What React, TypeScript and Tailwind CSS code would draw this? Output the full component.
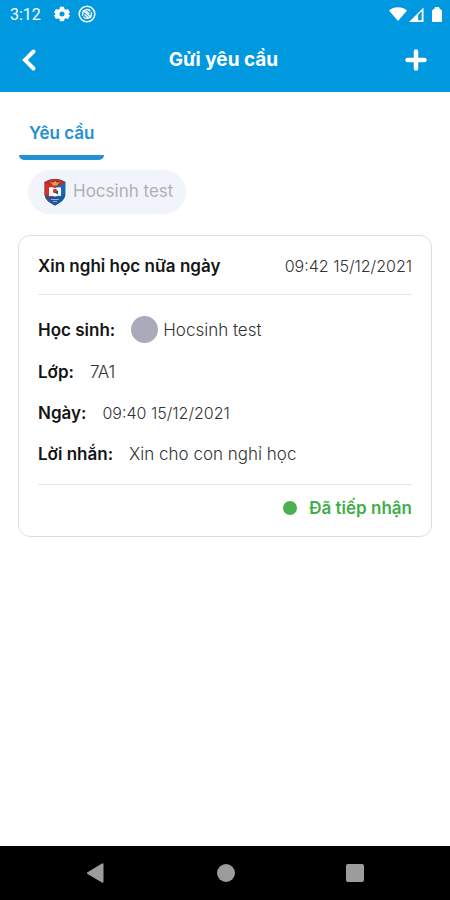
import type { ReactNode } from "react";

function StatusBar() {
  return (
    <div className="flex h-7 items-center justify-between pl-[10px] pr-2">
      <div className="flex items-center">
        <span className="w-11 pt-[2px] font-['Roboto',sans-serif] text-base leading-5">3:12</span>
        <svg className="h-4 w-4" viewBox="0 0 24 24" fill="currentColor" aria-hidden="true">
          <path
            fillRule="evenodd"
            d="M9 1h6l.7 3.5 1.9 1.1L21 4.4l3 5.2-2.7 2.3v.2L24 14.4l-3 5.2-3.4-1.2-1.9 1.1L15 23H9l-.7-3.5-1.9-1.1L3 19.6l-3-5.2 2.7-2.3v-.2L0 9.6l3-5.2 3.4 1.2 1.9-1.1zM12 8.2a3.8 3.8 0 1 0 0 7.6 3.8 3.8 0 0 0 0-7.6z"
          />
        </svg>
        <svg
          className="ml-2 h-[18px] w-[18px]"
          viewBox="0 0 18 18"
          fill="none"
          stroke="currentColor"
          aria-hidden="true"
        >
          <circle cx="9" cy="9" r="7.8" strokeWidth="1.5" />
          <path d="M4.6 10.8V9A4.4 4.4 0 0 1 12.5 6.3M13.4 7.2V9A4.4 4.4 0 0 1 5.5 11.7" strokeWidth="1.4" />
          <path d="M5 5.3L13.2 12.8M6.6 9.5l3.6 3.2M8 5.9l3.4 3" strokeWidth="1.3" />
        </svg>
      </div>
      <div className="flex items-center">
        <svg className="h-[14px] w-[18px]" viewBox="0 0 18 14" fill="currentColor" aria-hidden="true">
          <path d="M0 3.5C5-.8 13-.8 18 3.5L9 14z" />
        </svg>
        <svg className="ml-[2px] h-[15px] w-[15px]" viewBox="0 0 15 15" fill="currentColor" aria-hidden="true">
          <path fillRule="evenodd" d="M0 15L14.500 .500V15zM9.200 7.800v5.400h3.500V4.300z" />
        </svg>
        <svg className="ml-2 h-[15px] w-[10px]" viewBox="0 0 10 15" fill="currentColor" aria-hidden="true">
          <path d="M3 0h4l.5 1.500L10 3.500V14q0 1-1 1H1q-1 0-1-1V3.500l2.500-2z" />
        </svg>
      </div>
    </div>
  );
}

function Header() {
  return (
    <header className="bg-[#0099df] text-white">
      <StatusBar />
      <div className="flex h-16 items-center justify-between pl-[19px] pr-[22px]">
        <button type="button" aria-label="Quay lại" className="flex h-6 w-6 items-center">
          <svg viewBox="0 0 24 24" className="h-6 w-6" fill="none" stroke="currentColor" strokeWidth="4">
            <path d="M14.5 3.5L6 12l8.5 8.5" strokeLinecap="round" strokeLinejoin="miter" />
          </svg>
        </button>
        <h1 className="text-[19px] font-bold leading-6">Gửi yêu cầu</h1>
        <button type="button" aria-label="Thêm yêu cầu" className="flex h-6 w-6 items-center">
          <svg viewBox="0 0 24 24" className="h-6 w-6" fill="none" stroke="currentColor" strokeWidth="4.5">
            <path d="M12 3.5v17M3.5 12h17" strokeLinecap="round" />
          </svg>
        </button>
      </div>
    </header>
  );
}

function SchoolBadge() {
  return (
    <svg className="h-7 w-7" viewBox="0 0 28 28" aria-hidden="true">
      <circle cx="14" cy="14" r="13.5" fill="#fff" stroke="#e5eaf2" />
      <path d="M3.500 4Q10 .5 14 1q4-.5 10.500 3v13Q24 23 14 27.500 4 23 3.500 17z" fill="#1768bd" />
      <path d="M3.500 4H14v23.500Q4 23 3.500 17z" fill="#d92f2a" />
      <path d="M4 16.500Q5 23 14 27.500 23 23 24 16.500L19 19H9z" fill="#1d56a0" />
      <path d="M3.500 4Q10 .5 14 1q4-.5 10.500 3L20 7.500H8z" fill="#b9302b" />
      <path d="M9 3.500l3 1.500 2-2 2 2 3-1.500-3 4h-4z" fill="#e8a33f" />
      <path d="M8 9.500q3-.8 6 .5 3-1.300 6-.5V18q-3-.7-6 .6Q11 17.300 8 18z" fill="#fff" />
      <circle cx="14" cy="13" r="2.200" fill="#d33a32" />
      <path d="M13.500 14.500l3.500 2v-4z" fill="#294e80" />
      <path d="M10 21.500h8M12 23.500h4" stroke="#8baed5" />
    </svg>
  );
}

function Row({ label, children }: { label: string; children: ReactNode }) {
  return (
    <div className="flex items-center gap-4">
      <dt className="font-semibold text-[#151515]">{label}</dt>
      <dd className="flex items-center font-light text-[#333]">{children}</dd>
    </div>
  );
}

function RequestCard() {
  return (
    <article className="mx-[18px] mt-[21px] rounded-xl border border-[#dedede] px-[19px] text-[17px] leading-6">
      <div className="flex items-center justify-between border-b border-[#e6e6e6] pb-4 pt-[18px]">
        <h2 className="font-semibold text-[#151515]">Xin nghỉ học nữa ngày</h2>
        <time className="text-base font-light text-[#333]" dateTime="2021-12-15T09:42">
          09:42 15/12/2021
        </time>
      </div>
      <dl className="flex flex-col gap-[17px] border-b border-[#e6e6e6] pb-[18px] pt-[21px]">
        <Row label="Học sinh:">
          <span className="mr-[5px] h-[27px] w-[27px] rounded-full bg-[#a9abbb]" />
          Hocsinh test
        </Row>
        <Row label="Lớp:">7A1</Row>
        <Row label="Ngày:">
          <time className="text-base leading-6" dateTime="2021-12-15T09:40">
            09:40 15/12/2021
          </time>
        </Row>
        <Row label="Lời nhắn:">Xin cho con nghỉ học</Row>
      </dl>
      <div className="flex items-center justify-end gap-3 pb-4 pt-[11px] font-semibold text-[#3fae49]">
        <span className="h-[14px] w-[14px] rounded-full bg-[#4caf50]" />
        Đã tiếp nhận
      </div>
    </article>
  );
}

function NavBar() {
  return (
    <nav className="flex h-[54px] items-center justify-around bg-black px-[30px] text-[#9c9c9c]">
      <button type="button" aria-label="Back">
        <svg className="h-5 w-5" viewBox="0 0 20 20" fill="currentColor">
          <path d="M17.500 1v18a1 1 0 0 1-1.500.5L1.500 11a1 1 0 0 1 0-1.800L16 .500a1 1 0 0 1 1.500.500z" />
        </svg>
      </button>
      <button type="button" aria-label="Home">
        <span className="block h-[18px] w-[18px] rounded-full bg-current" />
      </button>
      <button type="button" aria-label="Recent apps">
        <span className="block h-[18px] w-[18px] rounded-xs bg-current" />
      </button>
    </nav>
  );
}

export default function App() {
  return (
    <div className="flex min-h-screen flex-col bg-white font-['Inter','Noto_Sans',sans-serif]">
      <Header />
      <main className="flex-1">
        <div className="flex px-[19px] pt-[29px]">
          <button type="button" className="text-[17px] font-semibold leading-6 text-[#2490d0]">
            <span className="block px-[10px] pb-[10px]">Yêu cầu</span>
            <span className="block h-[5px] rounded-b-full bg-[#2490d8]" />
          </button>
        </div>
        <div className="mt-[10px] flex px-7">
          <button
            type="button"
            className="flex h-11 items-center gap-1 rounded-full bg-[#f1f5fb] px-[13px] text-[17px] text-[#adb0b5]"
          >
            <SchoolBadge />
            Hocsinh test
          </button>
        </div>
        <RequestCard />
      </main>
      <NavBar />
    </div>
  );
}
